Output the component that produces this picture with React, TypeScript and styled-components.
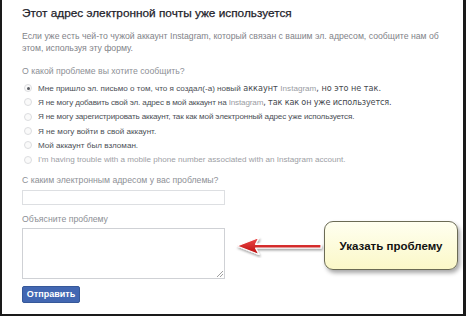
import React from "react";
import styled, { createGlobalStyle } from "styled-components";

const Global = createGlobalStyle`
  html, body { margin: 0; padding: 0; background: #fff; }
  body { font-family: "Liberation Sans", Arial, sans-serif; }
`;

const Frame = styled.div`
  position: relative;
  width: 466px;
  height: 316px;
  box-sizing: border-box;
  border-left: 2px solid #1a1a1a;
  border-right: 3px solid #1a1a1a;
  border-bottom: 2px solid #1a1a1a;
  background: #fff;
  padding: 5px 0 0 20px;
  display: flex;
  flex-direction: column;
`;

const Title = styled.h1`
  margin: 0;
  font-size: 11.8px;
  font-weight: normal;
  color: #1d2129;
  line-height: 16px;
  -webkit-text-stroke: 0.25px #1d2129;
`;

const Intro = styled.p`
  margin: 9px 0 0;
  font-size: 8.7px;
  line-height: 12px;
  color: #7f8389;
  width: 440px;
`;

const Label = styled.div<{ $top: number }>`
  margin-top: ${(p) => p.$top}px;
  font-size: 8.7px;
  line-height: 12px;
  color: #8d9096;
`;

const RadioList = styled.div`
  display: flex;
  flex-direction: column;
  margin-top: 4px;
  padding-left: 2px;
`;

const RadioRow = styled.div<{ $muted?: boolean; $spacing?: number }>`
  display: flex;
  align-items: center;
  gap: 6px;
  height: 14.3px;
  font-size: 8.1px;
  white-space: pre;
  letter-spacing: ${(p) => p.$spacing ?? 0}px;
  color: ${(p) => (p.$muted ? "#9da0a5" : "#4b4f56")};
`;

const Tail = styled.span`
  font-family: "DejaVu Sans", sans-serif;
  font-size: 8.1px;
  color: #45484e;
`;

const Brand = styled.span`
  color: #9a9da3;
`;

const Dot = styled.span<{ $checked?: boolean }>`
  width: 8px;
  height: 8px;
  flex: none;
  border-radius: 50%;
  box-sizing: border-box;
  border: 1px solid #dcdde0;
  background: #fafafa;
  display: flex;
  align-items: center;
  justify-content: center;
  &::after {
    content: "";
    width: 3px;
    height: 3px;
    border-radius: 50%;
    background: ${(p) => (p.$checked ? "#5a5d63" : "transparent")};
  }
`;

const TextInput = styled.div`
  margin-top: 4px;
  width: 203px;
  height: 15px;
  box-sizing: border-box;
  border: 1px solid #dddfe2;
  background: #fff;
`;

const TextArea = styled.div`
  position: relative;
  margin-top: 3px;
  width: 203px;
  height: 51px;
  box-sizing: border-box;
  border: 1px solid #cfd1d5;
  background: #fff;
`;

const Grip = styled.svg`
  position: absolute;
  right: 1px;
  bottom: 1px;
`;

const Button = styled.button`
  margin-top: 7px;
  width: 58px;
  height: 17px;
  padding: 0;
  border: 1px solid #365899;
  border-radius: 2px;
  background: #4267b2;
  color: #fff;
  font-family: "Liberation Sans", Arial, sans-serif;
  font-weight: bold;
  font-size: 9px;
  align-self: flex-start;
`;

const Callout = styled.div`
  position: absolute;
  left: 322px;
  top: 221px;
  width: 134px;
  height: 49px;
  box-sizing: border-box;
  border: 1.5px solid #6b6b55;
  border-radius: 9px;
  background: linear-gradient(#fffff0, #fbf8c8);
  box-shadow: 2px 3px 4px rgba(0, 0, 0, 0.35);
  display: flex;
  align-items: center;
  justify-content: center;
  font-weight: bold;
  font-size: 11.5px;
  color: #111;
`;

const Arrow = styled.svg`
  position: absolute;
  left: 232px;
  top: 236px;
`;

export default function App() {
  return (
    <>
      <Global />
      <Frame>
        <Title>Этот адрес электронной почты уже используется</Title>
        <Intro>
          Если уже есть чей-то чужой аккаунт Instagram, который связан с вашим эл. адресом, сообщите нам об
          этом, используя эту форму.
        </Intro>
        <Label $top={11}>О какой проблеме вы хотите сообщить?</Label>
        <RadioList>
          <RadioRow>
            <Dot $checked />
            <span>
              Мне пришло эл. письмо о том, что я создал(-а) новый<Tail> аккаунт </Tail>
              <Brand>Instagram</Brand>
              <Tail>, но это не так.</Tail>
            </span>
          </RadioRow>
          <RadioRow $spacing={-0.15}>
            <Dot />
            <span>
              Я не могу добавить свой эл. адрес в мой аккаунт на <Brand>Instagram</Brand>
              <Tail>, так как он уже используется.</Tail>
            </span>
          </RadioRow>
          <RadioRow $spacing={-0.15}>
            <Dot />
            <span>Я не могу зарегистрировать аккаунт, так как мой электронный адрес уже используется.</span>
          </RadioRow>
          <RadioRow>
            <Dot />
            <span>Я не могу войти в свой аккаунт.</span>
          </RadioRow>
          <RadioRow>
            <Dot />
            <span>Мой аккаунт был взломан.</span>
          </RadioRow>
          <RadioRow $muted>
            <Dot />
            <span>I'm having trouble with a mobile phone number associated with an Instagram account.</span>
          </RadioRow>
        </RadioList>
        <Label $top={7}>С каким электронным адресом у вас проблемы?</Label>
        <TextInput />
        <Label $top={8}>Объясните проблему</Label>
        <TextArea>
          <Grip width="7" height="7" viewBox="0 0 7 7">
            <path d="M1 7 L7 1 M4 7 L7 4" stroke="#888" strokeWidth="0.8" />
          </Grip>
        </TextArea>
        <Button>Отправить</Button>
        <Arrow width="92" height="22" viewBox="0 0 92 22">
          <defs>
            <linearGradient id="ar" x1="0" y1="0" x2="0" y2="1">
              <stop offset="0" stopColor="#f04a4a" />
              <stop offset="1" stopColor="#b80d0d" />
            </linearGradient>
            <filter id="sh" x="-10%" y="-30%" width="130%" height="180%">
              <feDropShadow dx="1" dy="2" stdDeviation="1" floodColor="#000" floodOpacity="0.35" />
            </filter>
          </defs>
          <path
            d="M3 10 L25 1.5 L21.5 8.3 L87 8.3 L87 12 L21.5 12 L25 18.5 Z"
            fill="url(#ar)"
            stroke="#fff"
            strokeWidth="1.2"
            strokeLinejoin="round"
            filter="url(#sh)"
          />
        </Arrow>
        <Callout>Указать проблему</Callout>
      </Frame>
    </>
  );
}
